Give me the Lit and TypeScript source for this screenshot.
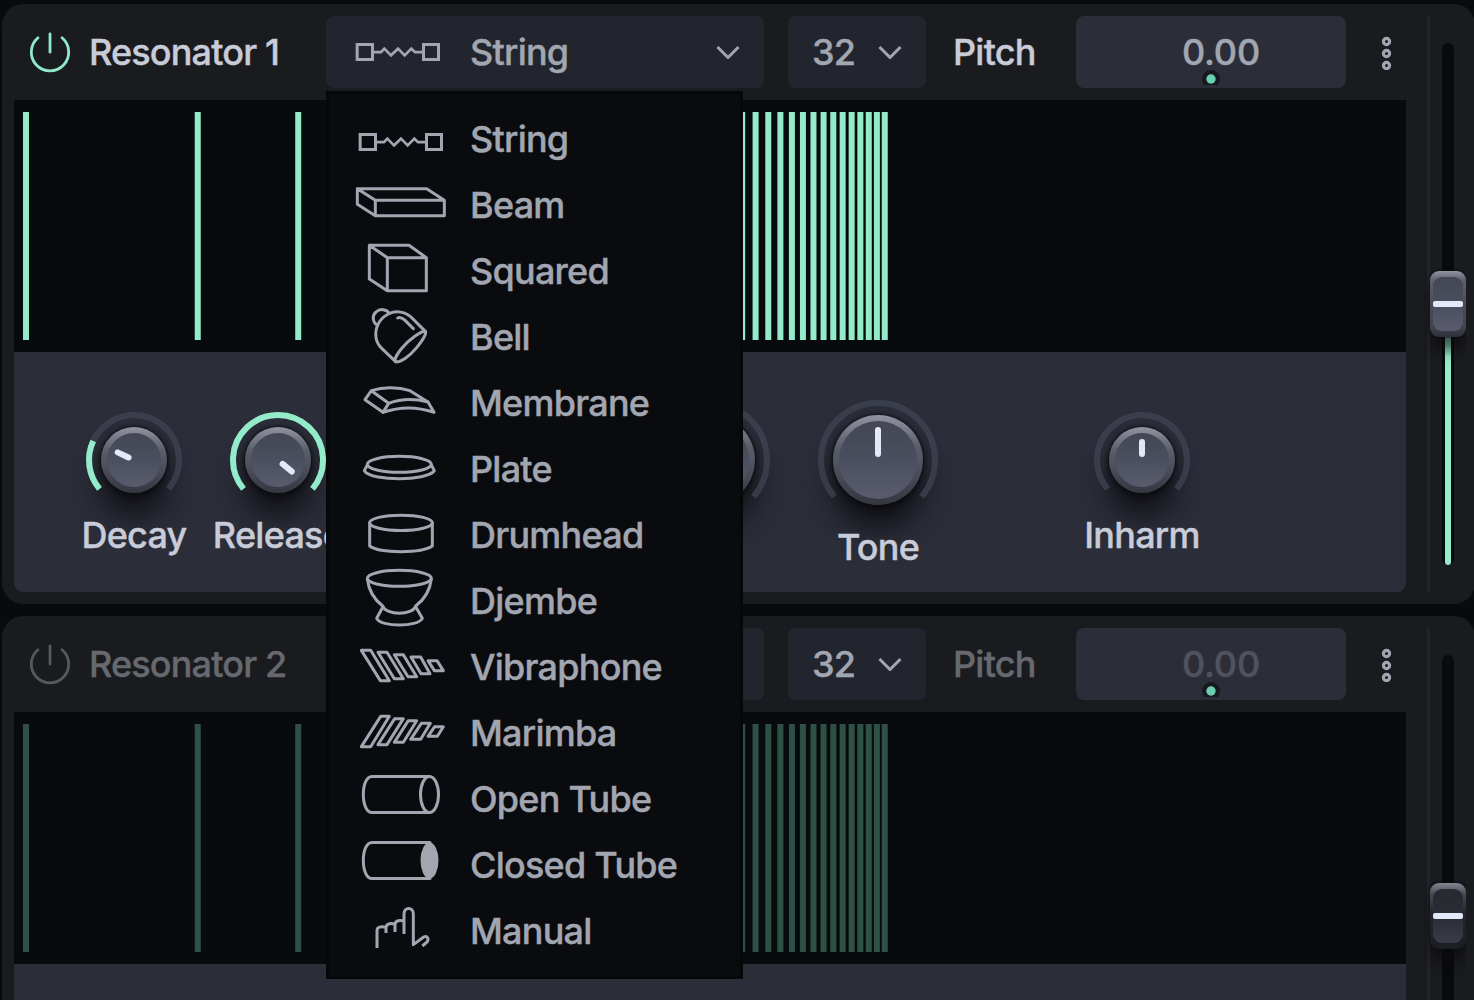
import { LitElement, html, css, svg, nothing } from "lit";
import { customElement, property } from "lit/decorators.js";
import { classMap } from "lit/directives/class-map.js";

interface Shape {
  label: string;
  top: number; // viewBox top, so that each drawing sits in its 66px row
  art: unknown;
}

const bars = (quads: string[]) => quads.map((q) => svg`<polygon points=${q} />`);
const STRING_ART = svg`
  <rect x="102.500" y="133.500" width="46" height="45" stroke-linejoin="miter" />
  <rect x="301.500" y="133.500" width="45" height="45" stroke-linejoin="miter" />
  <path stroke-linejoin="miter" stroke-width="8" d="M150 156.500H174L184 146L204 166L225 146L245 166L265 146L276 156.500H300" />`;

const SHAPES: Shape[] = [
  { label: "String", top: 48, art: STRING_ART },
  {
    label: "Beam",
    top: 246,
    art: svg`<path d="M94 296H302L355 331H148L94 296V343L148 377H355V331M148 331V377" />`,
  },
  {
    label: "Squared",
    top: 444,
    art: svg`<path d="M130 466H249L301 503H184L130 466V567L184 602H301V503M184 503V602" />`,
  },
  {
    label: "Bell",
    top: 12,
    art: svg`<path d="M155 76C139 68 138 46 150 36C162 25 182 27 190 40" />
      <path d="M298 94L258 54C240 35 210 30 187 42C160 55 146 85 150 112C152 128 158 136 168 146L209 185" />
      <path d="M298 94C285 93 250 118 228 144C212 163 204 180 209 185C222 188 250 170 272 143C292 118 303 98 298 94Z" />
      <path d="M215 54C224 50 232 56 238 62L262 86" />`,
  },
  {
    label: "Membrane",
    top: 210,
    art: svg`<path d="M136 272L117 299L171 337L188 310ZC170 261 215 260 252 272L306 306" />
      <path d="M188 310C225 296 270 297 306 306L324 337C275 320 220 320 171 337" />`,
  },
  {
    label: "Plate",
    top: 408,
    art: svg`<ellipse cx="220" cy="493" rx="96" ry="24" />
      <path d="M124 495L115 512C125 530 180 536 220 536C265 536 315 528 325 512L316 495" />`,
  },
  {
    label: "Drumhead",
    top: 6,
    art: svg`<ellipse cx="225" cy="68.500" rx="94" ry="23" />
      <path d="M131 68V138C150 152 190 155 225 155C265 155 300 151 319 138V68" />`,
  },
  {
    label: "Djembe",
    top: 204,
    art: svg`<ellipse cx="220" cy="235" rx="96" ry="24" />
      <path d="M124 237C128 270 140 295 170 318C180 347 260 347 269 318C300 295 312 270 316 237" />
      <path d="M171 320L152 355C165 382 275 382 289 355L269 320" />`,
  },
  {
    label: "Vibraphone",
    top: 402,
    art: bars([
      "106,451 134,451 190,542 163,542",
      "156,457 183,457 232,536 205,536",
      "205,464 232,464 272,530 246,530",
      "255,471 284,471 312,521 285,521",
      "306,482 333,482 352,512 325,512",
    ]),
  },
  {
    label: "Marimba",
    top: 30,
    art: bars([
      "164,79 190,79 134,170 106,170",
      "206,86 232,86 183,164 156,164",
      "247,92 272,92 232,157 205,157",
      "286,100 313,100 284,148 254,148",
      "326,110 352,110 334,139 306,139",
    ]),
  },
  {
    label: "Open Tube",
    top: 228,
    art: svg`<ellipse cx="310.500" cy="313.500" rx="27" ry="54" />
      <path d="M310 259.500H138C122 259.500 112 283 112 313.500C112 344 122 367.500 138 367.500H310" />`,
  },
  {
    label: "Closed Tube",
    top: 426,
    art: svg`<ellipse cx="310.500" cy="511.500" rx="27" ry="54" fill="currentColor" stroke="none" />
      <path d="M312 457.500H138C122 457.500 112 481 112 511.500C112 542 122 565.500 138 565.500H312" />`,
  },
  {
    label: "Manual",
    top: 624,
    art: svg`<path stroke-linecap="butt" d="M153 774V722C153 711 164 708 180 712M180 729V712C182 700 196 698 207 703M207 726V703C208 692 222 689 234 693M234 732V672C234 650 262 650 262 672V764L293 741C304 736 310 748 303 756L289 768" />`,
  },
];

const shapeIcon = (art: unknown, top: number) => html`
  <svg class="shape" viewBox="72 ${top} 312 198" width="104" height="66" fill="none"
    stroke="currentColor" stroke-width="9" stroke-linejoin="round" stroke-linecap="round">${art}</svg>`;

const chevron = html`
  <svg class="chevron" width="24" height="14" viewBox="0 0 24 14" fill="none"
    stroke="currentColor" stroke-width="3"><path d="M1.500 2L12 12.500L22.500 2" /></svg>`;

@customElement("rotary-knob")
class RotaryKnob extends LitElement {
  @property({ type: Number }) angle = 0;
  @property({ type: Number }) size = 96;
  @property({ type: Boolean }) bipolar = false;
  @property() label = "";

  static styles = css`
    :host { display: flex; flex-direction: column; align-items: center; }
    .dial { display: grid; place-items: center; flex: none; }
    .dial > * { grid-area: 1 / 1; }
    .cap {
      border-radius: 50%;
      padding: 6px;
      box-sizing: border-box;
      background: linear-gradient(#9194a0, #5b5e6b 35%, #4a4d59 65%, #343640);
      box-shadow: 0 0 3px 1px rgba(10, 11, 14, 0.7), 0 3px 6px rgba(10, 11, 14, 0.65),
        0 22px 30px rgba(10, 11, 14, 0.85);
    }
    .face { height: 100%; border-radius: 50%; background: linear-gradient(#444653, #4a4f5f 50%, #5a5c6d); }
    .ring { z-index: 1; overflow: visible; }
    .label {
      margin-top: 5px; font: 500 36px/44px Inter, sans-serif; letter-spacing: -0.75px;
      -webkit-text-stroke: 0.4px currentColor; color: #c8cbd8; white-space: nowrap;
    }
  `;

  private point(r: number, deg: number) {
    const a = (deg * Math.PI) / 180;
    return `${(r * Math.sin(a)).toFixed(2)} ${(-r * Math.cos(a)).toFixed(2)}`;
  }

  private arc(r: number, from: number, to: number) {
    return `M${this.point(r, from)}A${r} ${r} 0 ${to - from > 180 ? 1 : 0} 1 ${this.point(r, to)}`;
  }

  render() {
    const half = this.size / 2;
    const r = half - 3;
    const cap = this.size - 30;
    return html`
      <div class="dial">
        <svg width=${this.size} height=${this.size} viewBox="${-half} ${-half} ${this.size} ${this.size}" fill="none">
          <path d=${this.arc(r, -130, 130)} stroke="#3a3d4a" stroke-width="6" />
        </svg>
        <div class="cap" style="width:${cap}px;height:${cap}px"><div class="face"></div></div>
        <svg class="ring" width=${this.size} height=${this.size}
          viewBox="${-half} ${-half} ${this.size} ${this.size}" fill="none" stroke-width="6">
          <path d=${this.arc(r, -130, 130)} stroke="#3b3f4c" stroke-opacity=".8" />
          ${this.bipolar ? nothing : svg`<path d=${this.arc(r, -130, this.angle)} stroke="#93ebca" />`}
          <path d="M${this.point(6, this.angle)}L${this.point(half - 30, this.angle)}" stroke="#e4e9fa" stroke-linecap="round" />
        </svg>
      </div>
      ${this.label ? html`<div class="label">${this.label}</div>` : nothing}
    `;
  }
}

@customElement("level-fader")
class LevelFader extends LitElement {
  @property({ type: Boolean }) off = false;

  static styles = css`
    :host { display: block; width: 36px; height: 576px; clip-path: inset(0 0 0 -20px); }
    .rail { display: grid; justify-items: center; height: 100%; }
    .rail > * { grid-area: 1 / 1; }
    .track { width: 12px; height: 522px; margin-top: 27px; border-radius: 6px; background: #090a0d; }
    .fill { width: 6px; height: 249px; margin-top: 300px; border-radius: 0 0 3px 3px; background: #93ebca; }
    .thumb {
      display: grid; place-items: center; box-sizing: border-box;
      width: 36px; height: 66px; margin-top: 255px; padding: 6px 3px; border-radius: 9px;
      background: linear-gradient(#9194a0, #5d606d 14%, #4a4d59 50%, #41434f 85%, #2c2e3a);
      box-shadow: 0 0 3px 1px rgba(10, 11, 14, 0.6), 0 15px 12px -1px rgba(10, 11, 14, 0.6);
    }
    .face {
      display: flex; align-items: center; width: 30px; height: 54px; border-radius: 9px;
      background: linear-gradient(#444653, #4a5060 55%, #5a5c6d);
    }
    .mark { width: 30px; height: 6px; border-radius: 2px; background: #e4e9fa; }
    .off .thumb { background: linear-gradient(#858893, #4a4c56 16%, #24262d 45%, #1c1d22); }
    .off .face { background: linear-gradient(#282a31, #2a2c35 50%, #3a3c47); }
  `;

  render() {
    return html`
      <div class=${classMap({ rail: true, off: this.off })}>
        <div class="track"></div>
        ${this.off ? nothing : html`<div class="fill"></div>`}
        <div class="thumb"><div class="face"><div class="mark"></div></div></div>
      </div>
    `;
  }
}

@customElement("partials-view")
class PartialsView extends LitElement {
  @property({ type: Number }) count = 32;
  @property({ type: Boolean }) off = false;

  static styles = css`
    :host { display: block; height: 252px; background: #090a0d; }
    svg { display: block; }
    .on { fill: #93ebca; }
    .off { fill: #2e5045; }
  `;

  render() {
    const octave = 171.75;
    const lines = Array.from({ length: this.count }, (_, i) => 9 + octave * Math.log2(i + 1));
    return html`
      <svg width="1392" height="252" class=${this.off ? "off" : "on"}>
        ${lines.map((x) => svg`<rect x=${x.toFixed(2)} y="12" width="6" height="228" />`)}
      </svg>
    `;
  }
}

@customElement("resonator-panel")
class ResonatorPanel extends LitElement {
  @property() name = "";
  @property({ type: Boolean }) off = false;
  @property({ type: Boolean }) open = false;

  static styles = css`
    :host { display: block; }
    .panel {
      display: flex; box-sizing: border-box; width: 1473px; height: 600px; padding: 12px;
      border-radius: 21px; background: #1a1b1f;
      font: 500 36px/44px Inter, sans-serif; letter-spacing: -0.75px;
      -webkit-text-stroke: 0.4px currentColor; color: #c8cbd8;
    }
    .main { width: 1392px; flex: none; }
    .header { display: flex; align-items: center; height: 72px; margin-bottom: 12px; }
    .power { flex: none; margin-left: 14px; color: #8eeac9; }
    .title { width: 237px; margin-left: 17px; flex: none; white-space: nowrap; letter-spacing: -0.84px; }
    .select {
      position: relative; display: flex; align-items: center; box-sizing: border-box;
      width: 438px; height: 72px; padding: 0 24px 0 21px; border-radius: 8px;
      background: #22252e; color: #a2a6b1; flex: none;
    }
    .select .name { flex: 1; margin-left: 19px; }
    .shape, .chevron { display: block; flex: none; }
    .voices {
      display: flex; align-items: center; justify-content: space-between; box-sizing: border-box;
      width: 138px; height: 72px; margin-left: 24px; padding: 0 24px; border-radius: 8px;
      background: #22252e; color: #a2a6b1; flex: none;
    }
    .pitch { width: 123px; margin-left: 27px; flex: none; }
    .value {
      position: relative; box-sizing: border-box; width: 270px; height: 72px; padding: 14px 0 0 20px;
      border-radius: 8px; background: #2b2e39; color: #a2a6b1; text-align: center; flex: none;
      letter-spacing: -0.2px;
    }
    .origin { position: absolute; left: 126px; top: 54px; width: 18px; height: 15px; }
    .more { margin-left: 35px; color: #a2a6b1; flex: none; }
    .controls {
      display: grid; grid-template-columns: 144px 144px 276px 168px 168px 108px 144px;
      align-items: start; box-sizing: border-box; height: 240px; padding: 48px 0 0 48px;
      border-radius: 0 0 9px 9px; background: #2b2e39;
    }
    .small { margin-top: 12px; }
    .gain { grid-column: 4; }
    .inharm { grid-column: 7; }
    .divider { width: 3px; height: 576px; margin-left: 21px; background: #22232b; flex: none; }
    .menu {
      position: absolute; left: 0; top: 75px; z-index: 10; box-sizing: border-box;
      width: 417px; height: 888px; padding: 12px 0; border: 3px solid #060709; background: #0a0b0e;
      color: #a2a6b1;
    }
    .item { display: flex; align-items: center; height: 66px; padding-left: 21px; white-space: nowrap; }
    .item .name { margin-left: 16px; }
    .dim .power { color: #55585e; }
    .dim .title, .dim .pitch { color: #66696f; }
    .dim .value { color: #50535e; }
  `;

  render() {
    return html`
      <section class=${classMap({ panel: true, dim: this.off })}>
        <div class="main">
          <div class="header">
            <svg class="power" width="44" height="44" viewBox="-22 -22 44 44" fill="none"
              stroke="currentColor" stroke-width="2.800" stroke-linecap="round">
              <path d="M12 -14.200A18.700 18.700 0 1 1 -12 -14.200M0 -18.200V.200" />
            </svg>
            <div class="title">${this.name}</div>
            <div class="select">
              ${shapeIcon(STRING_ART, 57)}
              <span class="name">String</span>
              ${chevron}
              ${this.open ? this.menu() : nothing}
            </div>
            <div class="voices"><span>32</span>${chevron}</div>
            <div class="pitch">Pitch</div>
            <div class="value">
              0.00
              <svg class="origin" viewBox="0 0 18 15">
                <circle cx="9" cy="9" r="9" fill="#17191e" /><circle cx="9" cy="9" r="4.700" fill="#6acfb1" />
              </svg>
            </div>
            <svg class="more" width="12" height="36" viewBox="0 0 12 36" fill="none" stroke="currentColor" stroke-width="3.200">
              <circle cx="5.500" cy="7.500" r="3.100" /><circle cx="5.500" cy="19.500" r="3.100" /><circle cx="5.500" cy="31.500" r="3.100" />
            </svg>
          </div>
          <partials-view ?off=${this.off}></partials-view>
          <div class="controls">
            <rotary-knob class="small" label="Decay" angle="-65"></rotary-knob>
            <rotary-knob class="small" label="Release" angle="130"></rotary-knob>
            <rotary-knob class="gain" size="120" bipolar></rotary-knob>
            <rotary-knob label="Tone" size="120" bipolar></rotary-knob>
            <rotary-knob class="small inharm" label="Inharm" bipolar></rotary-knob>
          </div>
        </div>
        <div class="divider"></div>
        <level-fader ?off=${this.off}></level-fader>
      </section>
    `;
  }

  private menu() {
    return html`
      <div class="menu">
        ${SHAPES.map(
          (s) => html`<div class="item">${shapeIcon(s.art, s.top)}<span class="name">${s.label}</span></div>`
        )}
      </div>
    `;
  }
}

@customElement("app-root")
class AppRoot extends LitElement {
  static styles = css`
    :host { display: block; }
    .rack {
      display: flex; flex-direction: column; gap: 12px; box-sizing: border-box;
      width: 1474px; height: 1000px; padding: 4px 0 0 2px; overflow: hidden; background: #090a0d;
    }
    .rack > * { flex: none; }
    .front { position: relative; z-index: 2; }
  `;

  render() {
    return html`
      <main class="rack">
        <resonator-panel class="front" name="Resonator 1" open></resonator-panel>
        <resonator-panel name="Resonator 2" off></resonator-panel>
      </main>
    `;
  }
}
